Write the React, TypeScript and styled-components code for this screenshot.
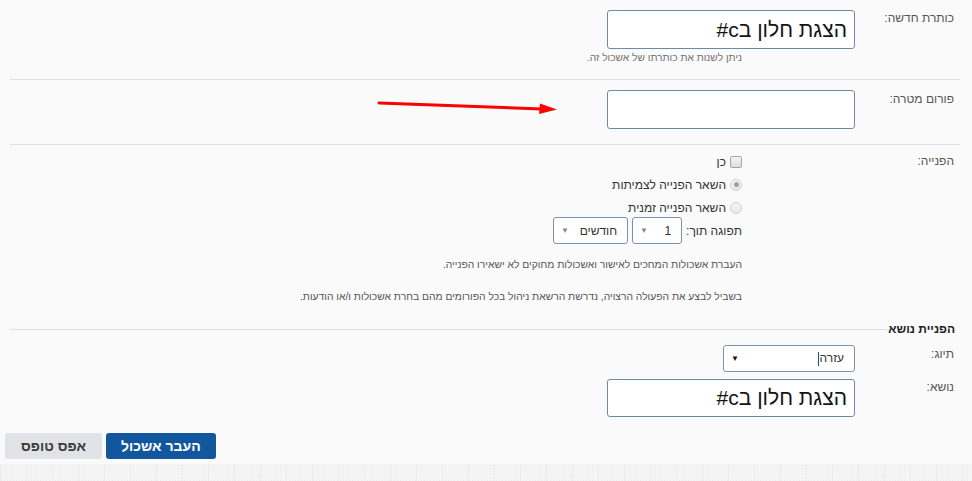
import React from "react";
import styled, { createGlobalStyle } from "styled-components";

const Global = createGlobalStyle`
  html, body { margin: 0; padding: 0; background: #fafafa; }
  body { font-family: "Liberation Sans", "DejaVu Sans", Arial, sans-serif; }
  * { box-sizing: border-box; }
`;

const Page = styled.div`
  direction: rtl;
  width: 972px;
  height: 481px;
  background: #fafafa;
  position: relative;
  overflow: hidden;
  display: flex;
  flex-direction: column;
`;

const Form = styled.div`
  padding: 0 12px 0 10px;
`;

const Row = styled.div<{ $pt: number; $pb: number; $line?: boolean }>`
  display: flex;
  padding-top: ${(p) => p.$pt}px;
  padding-bottom: ${(p) => p.$pb}px;
  border-bottom: ${(p) => (p.$line ? "1px solid #d5e1ec" : "none")};
`;

const Label = styled.div<{ $pt: number }>`
  width: 105px;
  flex: none;
  padding-right: 6px;
  padding-top: ${(p) => p.$pt}px;
  font-size: 12px;
  line-height: 16px;
  color: #555;
  text-align: right;
`;

const Content = styled.div`
  flex: 1;
  display: flex;
  flex-direction: column;
  align-items: flex-start;
`;

const TextBox = styled.div<{ $h: number }>`
  width: 248px;
  height: ${(p) => p.$h}px;
  background: #fff;
  border: 1px solid #6f8aa3;
  border-radius: 3px;
  padding: 0 7px;
  font-size: 21px;
  line-height: ${(p) => p.$h - 2}px;
  color: #141414;
  white-space: nowrap;
`;

const Hint = styled.div<{ $mt: number }>`
  margin-right: 113px;
  margin-top: ${(p) => p.$mt}px;
  font-size: 10.2px;
  line-height: 14px;
  color: #707070;
  white-space: nowrap;
`;

const Choices = styled.div`
  margin-right: 113px;
  display: flex;
  flex-direction: column;
  align-items: flex-start;
`;

const Choice = styled.div`
  display: flex;
  align-items: center;
  gap: 4px;
  height: 23px;
  font-size: 12px;
  color: #333;
  white-space: nowrap;
`;

const Check = styled.span`
  width: 12px;
  height: 12px;
  border: 1px solid #a6a6a6;
  border-radius: 2px;
  background: linear-gradient(#f4f4f4, #dcdcdc);
`;

const Radio = styled.span<{ $on?: boolean }>`
  width: 12px;
  height: 12px;
  border: 1px solid #d0d0d0;
  border-radius: 50%;
  background: linear-gradient(#f7f7f7, #e6e6e6);
  display: flex;
  align-items: center;
  justify-content: center;
  &::after {
    content: "";
    width: 5px;
    height: 5px;
    border-radius: 50%;
    background: ${(p) => (p.$on ? "#a0a0a0" : "transparent")};
  }
`;

const ExpireRow = styled.div`
  display: flex;
  align-items: center;
  gap: 4px;
  height: 27px;
  margin-top: -2px;
  font-size: 12px;
  color: #333;
  white-space: nowrap;
`;

const Select = styled.div<{ $w: number }>`
  width: ${(p) => p.$w}px;
  height: 27px;
  background: #fff;
  border: 1px solid #7a93aa;
  border-radius: 3px;
  display: flex;
  align-items: center;
  justify-content: space-between;
  padding: 0 10px 0 7px;
  font-size: 12px;
  color: #333;
`;

const Caret = styled.span<{ $dark?: boolean }>`
  font-size: 8px;
  color: ${(p) => (p.$dark ? "#111" : "#888")};
`;

const Cursor = styled.span`
  display: inline-block;
  width: 1px;
  height: 14px;
  background: #1b4f8a;
  vertical-align: middle;
  margin-left: 1px;
`;

const Note = styled.div<{ $mt: number }>`
  margin-right: 113px;
  margin-top: ${(p) => p.$mt}px;
  font-size: 10.3px;
  line-height: 14px;
  color: #555;
  white-space: nowrap;
`;

const Legend = styled.div`
  display: flex;
  align-items: center;
  height: 15px;
  margin-top: -5px;
`;

const LegendText = styled.span`
  font-size: 12px;
  font-weight: bold;
  color: #222;
  padding-right: 5px;
  padding-left: 1px;
  line-height: 15px;
`;

const LegendLine = styled.span`
  flex: 1;
  height: 1px;
  background: #d5e1ec;
`;

const Buttons = styled.div`
  display: flex;
  justify-content: flex-end;
  gap: 4px;
  margin-top: 16px;
  padding-left: 5px;
`;

const Button = styled.div<{ $primary?: boolean }>`
  height: 26px;
  padding: 0 ${(p) => (p.$primary ? 15 : 16)}px;
  border-radius: 3px;
  background: ${(p) => (p.$primary ? "#12579e" : "#e1e3e6")};
  color: ${(p) => (p.$primary ? "#fff" : "#3c3c3c")};
  font-size: 14px;
  font-weight: bold;
  line-height: 26px;
  white-space: nowrap;
`;

const Footer = styled.div`
  margin-top: auto;
  height: 17px;
  background-color: #f5f5f5;
  background-image:
    linear-gradient(90deg, #ececec 1px, transparent 1px),
    radial-gradient(#ececec 0.6px, transparent 0.7px);
  background-size: 26px 100%, 3px 3px;
`;

const Arrow = styled.svg`
  position: absolute;
  left: 376px;
  top: 96px;
`;

export default function App() {
  return (
    <>
      <Global />
      <Page>
        <Form>
          <Row $pt={10} $pb={14} $line>
            <Label $pt={0}>כותרת חדשה:</Label>
            <Content>
              <TextBox $h={39}>הצגת חלון בc#</TextBox>
              <Hint $mt={2}>ניתן לשנות את כותרתו של אשכול זה.</Hint>
            </Content>
          </Row>
          <Row $pt={10} $pb={15} $line>
            <Label $pt={1}>פורום מטרה:</Label>
            <Content>
              <TextBox $h={39} />
            </Content>
          </Row>
          <Row $pt={5} $pb={23}>
            <Label $pt={3}>הפנייה:</Label>
            <Content>
              <Choices>
                <Choice>
                  <Check />
                  כן
                </Choice>
                <Choice>
                  <Radio $on />
                  השאר הפנייה לצמיתות
                </Choice>
                <Choice>
                  <Radio />
                  השאר הפנייה זמנית
                </Choice>
                <ExpireRow>
                  תפוגה תוך:
                  <Select $w={50}>
                    <span>1</span>
                    <Caret>▼</Caret>
                  </Select>
                  <Select $w={75}>
                    <span>חודשים</span>
                    <Caret>▼</Caret>
                  </Select>
                </ExpireRow>
              </Choices>
              <Note $mt={14}>העברת אשכולות המחכים לאישור ואשכולות מחוקים לא ישאירו הפנייה.</Note>
              <Note $mt={18}>בשביל לבצע את הפעולה הרצויה, נדרשת הרשאת ניהול בכל הפורומים מהם בחרת אשכולות ו/או הודעות.</Note>
            </Content>
          </Row>
          <Legend>
            <LegendText>הפניית נושא</LegendText>
            <LegendLine />
          </Legend>
          <Row $pt={8} $pb={0}>
            <Label $pt={1}>תיוג:</Label>
            <Content>
              <Select $w={132}>
                <span>
                  עזרה
                  <Cursor />
                </span>
                <Caret $dark>▼</Caret>
              </Select>
            </Content>
          </Row>
          <Row $pt={7} $pb={0}>
            <Label $pt={0}>נושא:</Label>
            <Content>
              <TextBox $h={38}>הצגת חלון בc#</TextBox>
            </Content>
          </Row>
        </Form>
        <Buttons>
          <Button $primary>העבר אשכול</Button>
          <Button>אפס טופס</Button>
        </Buttons>
        <Footer />
        <Arrow width="184" height="20" viewBox="0 0 184 20">
          <line x1="3" y1="7" x2="166" y2="13" stroke="#f00" strokeWidth="3" strokeLinecap="round" />
          <polygon points="164,7.5 181,13.5 163,18" fill="#f00" />
        </Arrow>
      </Page>
    </>
  );
}
